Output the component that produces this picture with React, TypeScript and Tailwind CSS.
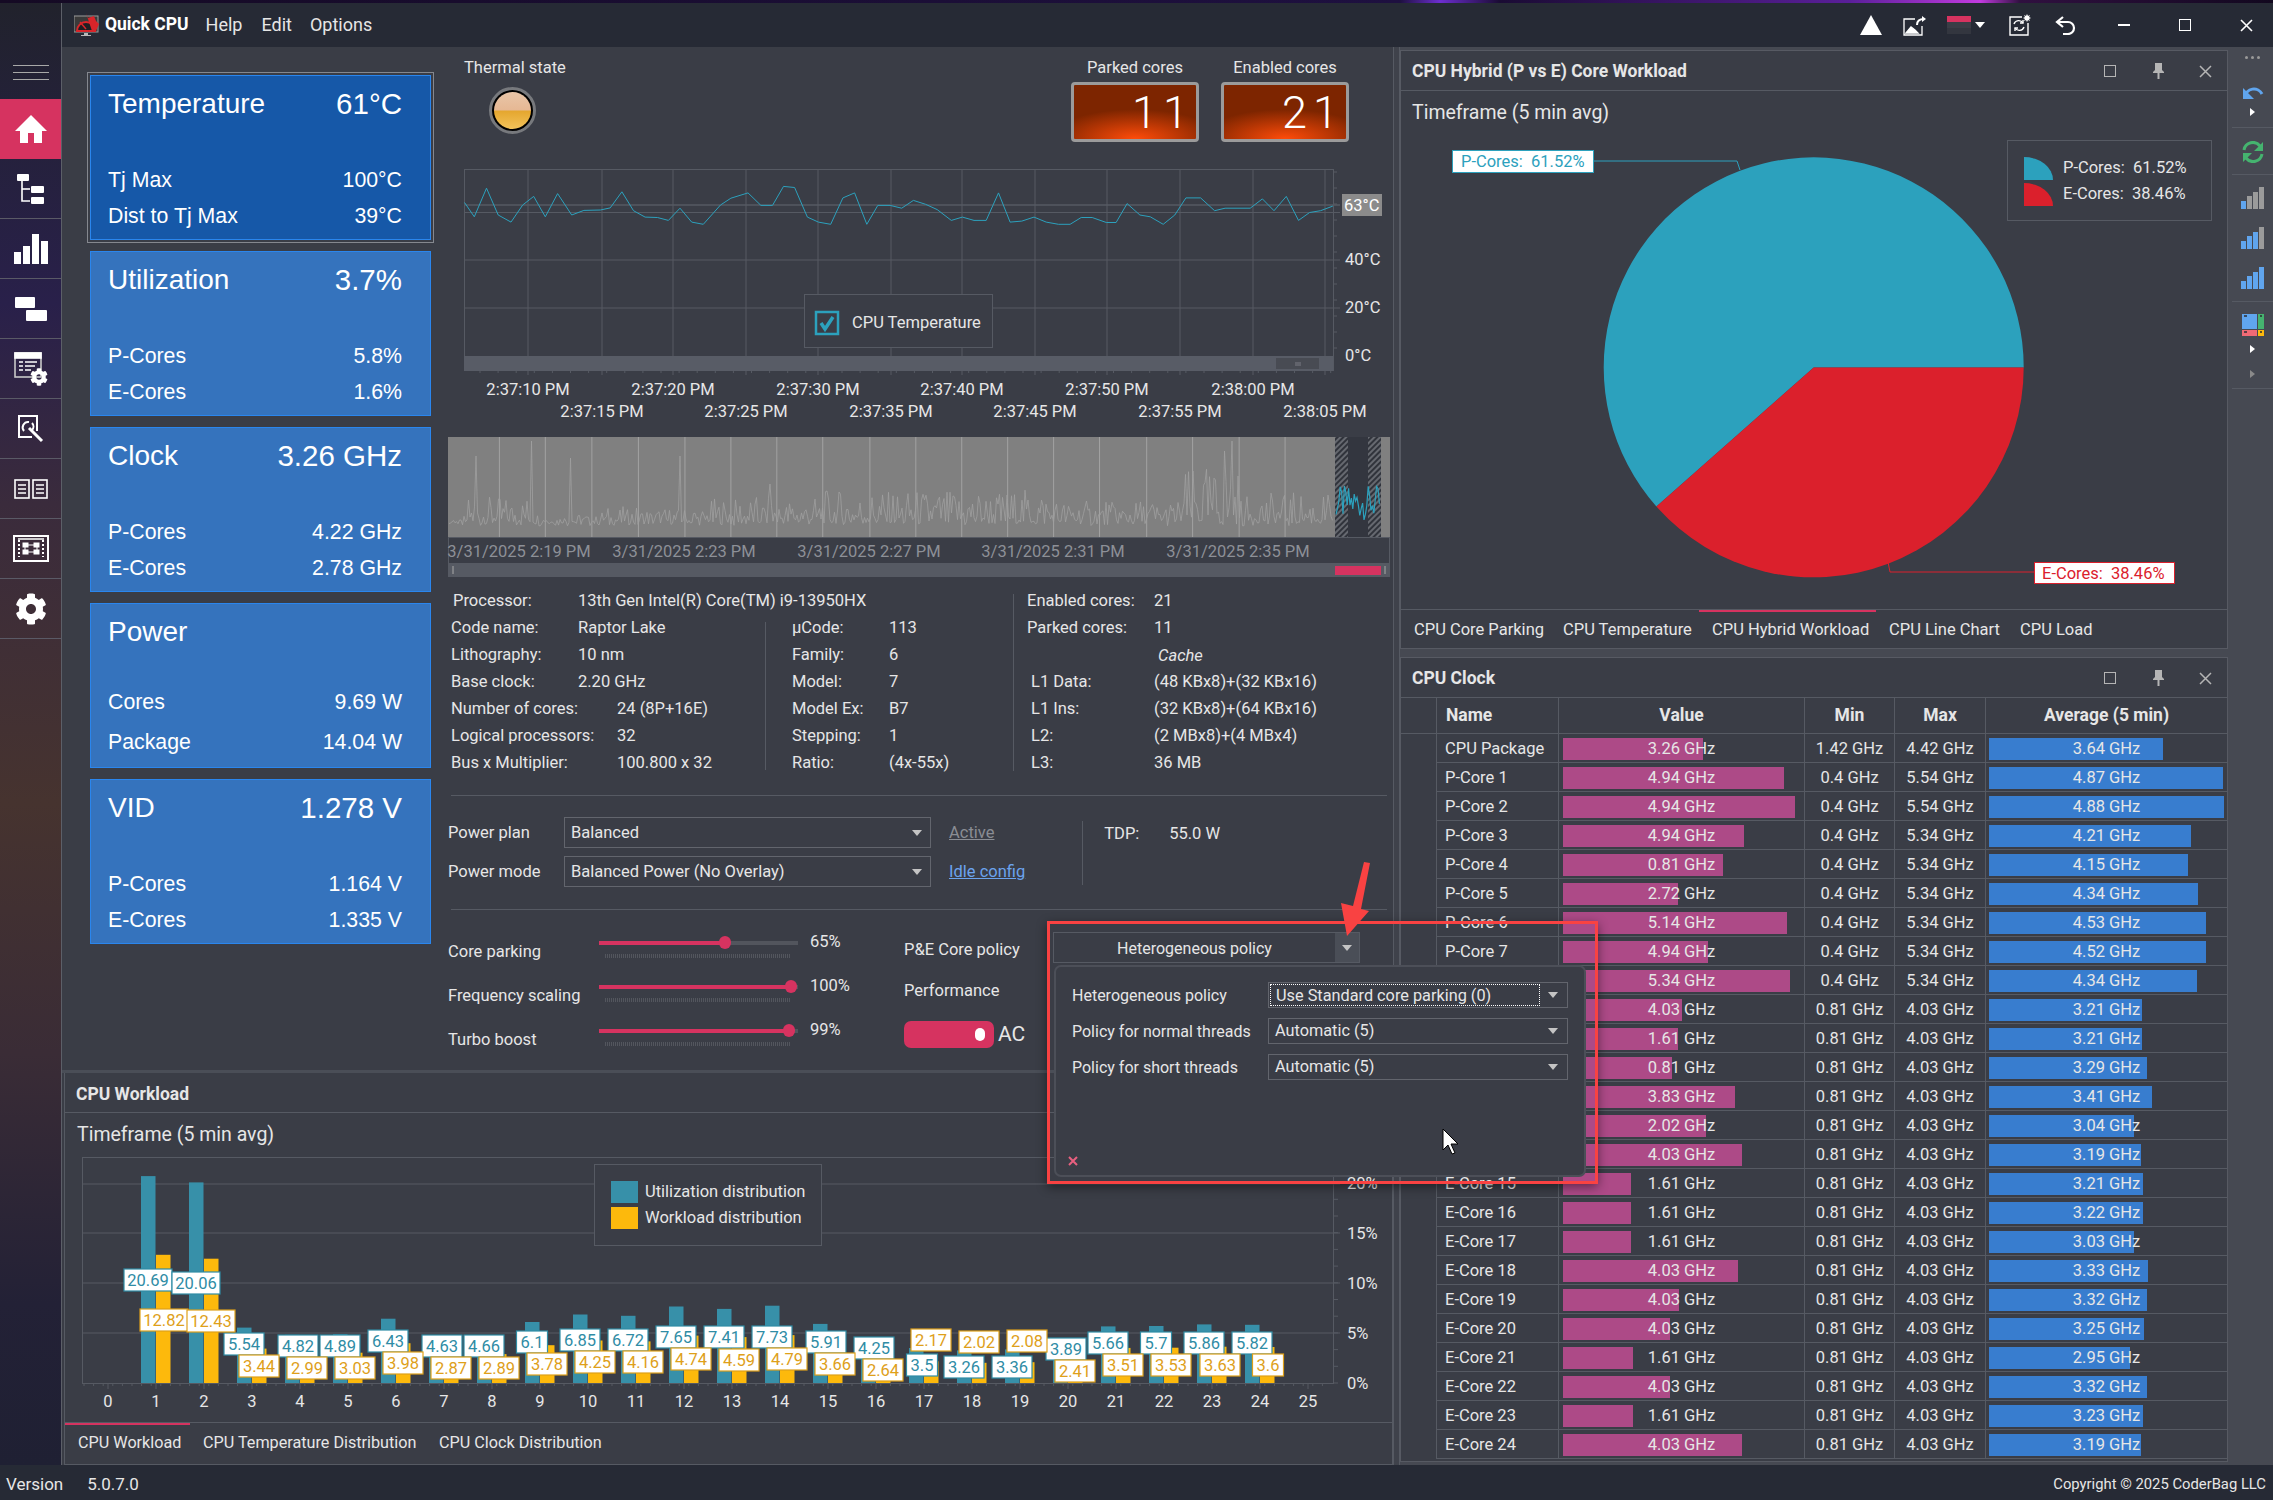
import { FaCog } from 'react-icons/fa';

const line = '#565a63';

// temperature trace, read off the chart (x/1.633, y/2.8 from the plot crop)
const tempTrace = [[40,455],[56,495],[76,415],[95,490],[116,510],[135,462],[153,438],[172,495],[192,430],[215,490],[235,477],[262,476],[278,470],[297,425],[316,478],[335,496],[355,497],[373,505],[392,471],[411,510],[430,516],[458,462],[475,443],[503,428],[524,463],[543,463],[561,410],[579,413],[600,496],[618,510],[638,516],[658,442],[677,428],[697,516],[715,463],[735,463],[754,471],[773,449],[793,460],[812,475],[835,505],[853,496],[872,505],[892,505],[912,428],[931,510],[950,507],[970,496],[990,510],[1010,516],[1029,516],[1047,497],[1065,497],[1088,511],[1104,511],[1122,458],[1143,490],[1160,495],[1181,516],[1200,490],[1218,442],[1242,442],[1265,478],[1282,471],[1323,471],[1343,445],[1362,478],[1382,438],[1402,505],[1420,483],[1438,478],[1458,465]]
    .map(([x, y]) => `${(440 + x / 1.633).toFixed(1)},${(40 + y / 2.8).toFixed(1)}`)
    .join(' ');

const rnd = (i: number) => {
    const v = Math.sin(i * 12.9898) * 43758.5453;
    return v - Math.floor(v);
};

const overviewAmp = (x: number) => {
    if (x < 466) return 6;
    if (x < 532) return 28;
    if (x < 600) return 10;
    if (x < 710) return 16;
    if (x < 820) return 26;
    if (x < 1050) return 34;
    if (x < 1180) return 24;
    if (x < 1240) return 56;
    return 30;
};

const spikes: Record<number, number> = { 476: 70, 510: 55, 532: 85, 571: 68, 680: 70, 770: 42, 1185: 62, 1197: 85, 1225: 75, 1232: 85 };

const overviewTrace = () => {
    const pts: string[] = [];
    for (let i = 0; i < 590; i++) {
        const x = 449 + i * 1.5;
        const r = rnd(i + 3);
        let h = r * r * overviewAmp(x) + rnd(i + 91) * 4;
        const s = spikes[Math.round(x)];
        if (s) h = s;
        pts.push(`${x},${(526 - h).toFixed(1)}`);
    }
    return pts.join(' ');
};

const windowTrace = () => {
    const pts: string[] = [];
    for (let i = 0; i < 32; i++) {
        pts.push(`${1336 + i * 1.4},${(508 - (rnd(i + 7) - 0.35) * 34).toFixed(1)}`);
    }
    return pts.join(' ');
};

const workload: [number, string, number, number, string, number, number][] = [
    [1, '20.69', 148, 1280, '12.82', 164, 1320],
    [2, '20.06', 196, 1283, '12.43', 211, 1321],
    [3, '5.54', 244, 1344, '3.44', 259, 1366],
    [4, '4.82', 298, 1346, '2.99', 307, 1368],
    [5, '4.89', 340, 1346, '3.03', 355, 1368],
    [6, '6.43', 388, 1341, '3.98', 403, 1363],
    [7, '4.63', 442, 1346, '2.87', 451, 1368],
    [8, '4.66', 484, 1346, '2.89', 499, 1368],
    [9, '6.1', 532, 1342, '3.78', 547, 1364],
    [10, '6.85', 580, 1340, '4.25', 595, 1362],
    [11, '6.72', 628, 1340, '4.16', 643, 1362],
    [12, '7.65', 676, 1337, '4.74', 691, 1359],
    [13, '7.41', 724, 1337, '4.59', 739, 1360],
    [14, '7.73', 772, 1337, '4.79', 787, 1359],
    [15, '5.91', 826, 1342, '3.66', 835, 1364],
    [16, '4.25', 874, 1348, '2.64', 883, 1370],
    [17, '3.5', 922, 1365, '2.17', 931, 1340],
    [18, '3.26', 964, 1367, '2.02', 979, 1342],
    [19, '3.36', 1012, 1367, '2.08', 1027, 1341],
    [20, '3.89', 1066, 1349, '2.41', 1075, 1371],
    [21, '5.66', 1108, 1343, '3.51', 1123, 1365],
    [22, '5.7', 1156, 1343, '3.53', 1171, 1365],
    [23, '5.86', 1204, 1343, '3.63', 1220, 1365],
    [24, '5.82', 1252, 1343, '3.6', 1268, 1365],
];

const clockRows: [string, string, number, string, string, string, number][] = [
    ['CPU Package', '3.26', 140, '1.42', '4.42', '3.64', 174],
    ['P-Core 1', '4.94', 221, '0.4', '5.54', '4.87', 234],
    ['P-Core 2', '4.94', 232, '0.4', '5.54', '4.88', 235],
    ['P-Core 3', '4.94', 181, '0.4', '5.34', '4.21', 202],
    ['P-Core 4', '0.81', 160, '0.4', '5.34', '4.15', 199],
    ['P-Core 5', '2.72', 115, '0.4', '5.34', '4.34', 209],
    ['P-Core 6', '5.14', 224, '0.4', '5.34', '4.53', 217],
    ['P-Core 7', '4.94', 145, '0.4', '5.34', '4.52', 217],
    ['P-Core 8', '5.34', 227, '0.4', '5.34', '4.34', 208],
    ['E-Core 9', '4.03', 119, '0.81', '4.03', '3.21', 153],
    ['E-Core 10', '1.61', 115, '0.81', '4.03', '3.21', 153],
    ['E-Core 11', '0.81', 109, '0.81', '4.03', '3.29', 158],
    ['E-Core 12', '3.83', 172, '0.81', '4.03', '3.41', 163],
    ['E-Core 13', '2.02', 143, '0.81', '4.03', '3.04', 145],
    ['E-Core 14', '4.03', 179, '0.81', '4.03', '3.19', 152],
    ['E-Core 15', '1.61', 68, '0.81', '4.03', '3.21', 154],
    ['E-Core 16', '1.61', 68, '0.81', '4.03', '3.22', 154],
    ['E-Core 17', '1.61', 68, '0.81', '4.03', '3.03', 145],
    ['E-Core 18', '4.03', 175, '0.81', '4.03', '3.33', 159],
    ['E-Core 19', '4.03', 116, '0.81', '4.03', '3.32', 158],
    ['E-Core 20', '4.03', 107, '0.81', '4.03', '3.25', 155],
    ['E-Core 21', '1.61', 70, '0.81', '4.03', '2.95', 141],
    ['E-Core 22', '4.03', 107, '0.81', '4.03', '3.32', 158],
    ['E-Core 23', '1.61', 70, '0.81', '4.03', '3.23', 154],
    ['E-Core 24', '4.03', 179, '0.81', '4.03', '3.19', 152],
];

const Caret = ({ color = '#c4c4c4' }: { color?: string }) => (
    <svg width="10" height="6" viewBox="0 0 10 6" className="shrink-0">
        <path d="M0 0h10L5 6z" fill={color} />
    </svg>
);

const SideSlot = ({ children, active }: { children: React.ReactNode; active?: boolean }) => (
    <div className={`h-[60px] flex items-center justify-center border-b ${active ? 'bg-[#d63360] border-transparent' : 'border-[#5a5a66]'}`}>
        {children}
    </div>
);

const Sidebar = () => (
    <div className="w-[62px] shrink-0 flex flex-col border-r border-[#5c5f68] bg-[linear-gradient(180deg,#21222c_0,#24213a_120px,#29204a_300px,#3a2b3c_500px,#46332f_800px,#3a2c36_1050px,#232136_1300px,#1f2033_1462px)]">
        <div className="h-[96px] flex flex-col items-center justify-start pt-[62px] gap-[6px]">
            <div className="w-[36px] h-px bg-[#a8a8a8]" />
            <div className="w-[36px] h-px bg-[#a8a8a8]" />
            <div className="w-[36px] h-px bg-[#a8a8a8]" />
        </div>
        <SideSlot active>
            <svg width="32" height="28" viewBox="0 0 32 28" fill="#fff">
                <path d="M16 0 32 16H27V28H19V18H13V28H5V16H0z" />
            </svg>
        </SideSlot>
        <SideSlot>
            <svg width="27" height="30" viewBox="0 0 27 30" fill="#fff">
                <rect x="0" y="0" width="12" height="7" rx="1" />
                <rect x="14" y="12" width="13" height="7" rx="1" />
                <rect x="14" y="23" width="13" height="7" rx="1" />
                <path d="M5 7v20h8" fill="none" stroke="#fff" strokeWidth="1.6" />
                <path d="M5 15h8" fill="none" stroke="#fff" strokeWidth="1.6" />
            </svg>
        </SideSlot>
        <SideSlot>
            <svg width="34" height="30" viewBox="0 0 34 30" fill="#fff">
                <rect x="0" y="18" width="7" height="12" />
                <rect x="9" y="12" width="7" height="18" />
                <rect x="18" y="0" width="7" height="30" />
                <rect x="27" y="7" width="7" height="23" />
            </svg>
        </SideSlot>
        <SideSlot>
            <svg width="32" height="24" viewBox="0 0 32 24" fill="#fff">
                <rect x="0" y="0" width="20" height="11" rx="1" />
                <rect x="11" y="13" width="21" height="11" rx="1" />
            </svg>
        </SideSlot>
        <SideSlot>
            <div className="relative w-[34px] h-[34px]">
                <svg width="28" height="26" viewBox="0 0 28 26" fill="none" stroke="#c8c8c8" strokeWidth="1.6">
                    <rect x="1" y="1" width="26" height="24" />
                    <rect x="1" y="1" width="26" height="5" fill="#fff" stroke="#fff" />
                    <path d="M5 10h4M11 10h12M5 14h4M11 14h10M5 18h4M11 18h6" stroke="#fff" />
                </svg>
                <FaCog className="absolute right-0 bottom-0 text-white" size={18} />
            </div>
        </SideSlot>
        <SideSlot>
            <svg width="26" height="28" viewBox="0 0 26 28" fill="none" stroke="#fff" strokeWidth="2">
                <path d="M19 16V1H1v21h13" />
                <path d="M6 16a5.5 5.5 0 0 1 5-9" />
                <path d="M14 8a5 5 0 0 1 0 7" />
                <path d="m11 13 13 13" strokeWidth="3" />
            </svg>
        </SideSlot>
        <SideSlot>
            <svg width="34" height="20" viewBox="0 0 34 20" fill="none" stroke="#fff" strokeWidth="1.6">
                <rect x="1" y="1" width="14" height="18" />
                <rect x="19" y="1" width="14" height="18" />
                <path d="M4 6h8M4 10h8M4 14h8M22 6h8M22 10h8M22 14h8" />
            </svg>
        </SideSlot>
        <SideSlot>
            <svg width="36" height="27" viewBox="0 0 36 27" fill="none" stroke="#fff">
                <rect x="1" y="1" width="34" height="25" strokeWidth="2" />
                <path d="M6 5v17M30 5v17" strokeDasharray="2 2" strokeWidth="2" />
                <path d="M5 4h26" strokeWidth="1.5" />
                <rect x="10" y="8" width="5" height="4" fill="#fff" />
                <rect x="21" y="8" width="5" height="4" fill="#fff" />
                <rect x="10" y="15" width="5" height="4" fill="#fff" />
                <rect x="21" y="15" width="5" height="4" fill="#fff" />
                <path d="M15 10h6M15 17h6M12 12v3M24 12v3" />
            </svg>
        </SideSlot>
        <SideSlot>
            <FaCog className="text-white" size={32} />
        </SideSlot>
    </div>
);

const TitleBar = () => (
    <div className="h-[44px] shrink-0 flex items-center bg-[#262a35] text-[18px]">
        <svg width="25" height="24" viewBox="0 0 25 24" className="ml-[12px]">
            <rect x="0" y="3" width="24" height="16" fill="#3a3a3a" stroke="#9a9a9a" />
            <path d="M3 18a9 9 0 0 1 18 0z" fill="#1e1e22" stroke="#d8252a" strokeWidth="2" />
            <path d="M12 0l2 5 6-2 2 5 3 3-3 7h-4z" fill="#d8252a" />
            <path d="M12 16 6 9" stroke="#d8252a" strokeWidth="1.5" />
            <path d="M10 20h4v2h3v1H7v-1h3z" fill="#b8b8b8" />
        </svg>
        <span className="ml-[6px] font-bold text-white text-[17.5px]">Quick CPU</span>
        <span className="ml-[17px] text-[#e6e6e6]">Help</span>
        <span className="ml-[19px] text-[#e6e6e6]">Edit</span>
        <span className="ml-[18px] text-[#e6e6e6]">Options</span>
        <div className="ml-auto flex items-center pr-[20px]">
            <svg width="22" height="20" viewBox="0 0 22 20"><path d="M11 0 22 20H0z" fill="#fff" /></svg>
            <svg width="24" height="21" viewBox="0 0 24 21" className="ml-[21px]" fill="none" stroke="#fff" strokeWidth="1.3">
                <path d="M12 4H1v16h18V11" />
                <path d="M3 18l5-6 4 3 3 3z" fill="#fff" />
                <path d="M14 10c0-4 3-6 7-6" strokeWidth="2" />
                <path d="M19 1l4 3-4 3z" fill="#fff" stroke="none" />
            </svg>
            <div className="ml-[20px] w-[24px] h-[18px] flex flex-col">
                <div className="h-[6px] bg-[#d63360]" />
                <div className="h-[6px] bg-[#3a3d46]" />
                <div className="h-[6px] bg-[#33363f]" />
            </div>
            <div className="ml-[4px]"><Caret color="#ffffff" /></div>
            <svg width="22" height="22" viewBox="0 0 22 22" className="ml-[24px]" fill="none" stroke="#fff" strokeWidth="1.4">
                <path d="M13 3H1v18h18V9" />
                <path d="M5 10a5 5 0 0 1 9-1M15 13a5 5 0 0 1-9 1" />
                <path d="M14 6v3h-3M6 17v-3h3" />
                <path d="M18 0l1 2 2-1-1 2 2 1-2 1 1 2-2-1-1 2-1-2-2 1 1-2-2-1 2-1-1-2 2 1z" fill="#fff" stroke="none" />
            </svg>
            <svg width="21" height="19" viewBox="0 0 21 19" className="ml-[24px]" fill="none" stroke="#fff" strokeWidth="2.2">
                <path d="M8 1 2 6l6 5" />
                <path d="M2 6h11a6 6 0 0 1 0 12H8" />
            </svg>
            <div className="ml-[42px] w-[12px] h-[2px] bg-white" />
            <div className="ml-[49px] w-[12px] h-[12px] border-[1.5px] border-white" />
            <svg width="13" height="13" viewBox="0 0 13 13" className="ml-[49px]" stroke="#fff" strokeWidth="1.6"><path d="M1 1l11 11M12 1 1 12" /></svg>
        </div>
    </div>
);

const Card = ({ title, value, rows, selected, power }: { title: string; value?: string; rows: [string, string][]; selected?: boolean; power?: boolean }) => (
    <div className={`h-[165px] w-[341px] pl-[17px] pr-[28px] pt-[10px] border-[1.5px] border-[#2a86ee] font-['Liberation_Sans',Arial,sans-serif] text-white ${selected ? 'bg-[#1658a8] outline outline-[1px] outline-offset-[2px] outline-[#85888f]' : 'bg-[#3573bd]'}`}>
        <div className="h-[34px] flex items-center justify-between">
            <span className="text-[28px]">{title}</span>
            <span className="text-[29.5px] pt-[3px]">{value}</span>
        </div>
        <div className={`flex flex-col ${power ? 'mt-[41px] gap-[14px]' : 'mt-[47px] gap-[10px]'}`}>
            {rows.map(([label, val]) => (
                <div key={label} className="h-[26px] flex items-center justify-between text-[21.3px]">
                    <span>{label}</span>
                    <span>{val}</span>
                </div>
            ))}
        </div>
    </div>
);

const Segment = ({ value }: { value: string }) => (
    <div className="w-[128px] h-[60px] rounded-[4px] border-[3px] border-[#9b9b9b] bg-[radial-gradient(ellipse_70%_55%_at_50%_100%,#ff4c0a_0,#b83604_55%,#7d2500_100%)] flex items-center justify-end pr-[2px] font-light text-[45px] leading-none text-white">
        <span className="tracking-[6px]">{value}</span>
    </div>
);

const TempChart = () => {
    const vx = [528, 602, 673, 746, 818, 891, 962, 1035, 1107, 1180, 1253, 1325];
    const row1: [number, string][] = [[528, '2:37:10 PM'], [673, '2:37:20 PM'], [818, '2:37:30 PM'], [962, '2:37:40 PM'], [1107, '2:37:50 PM'], [1253, '2:38:00 PM']];
    const row2: [number, string][] = [[602, '2:37:15 PM'], [746, '2:37:25 PM'], [891, '2:37:35 PM'], [1035, '2:37:45 PM'], [1180, '2:37:55 PM'], [1325, '2:38:05 PM']];
    return (
        <svg width="953" height="270" viewBox="440 160 953 270" className="block shrink-0 text-[16.5px]">
            <rect x="464.5" y="169.5" width="869" height="201" fill="none" stroke={line} />
            {vx.map((x) => <line key={x} x1={x} x2={x} y1="169" y2="375" stroke={line} />)}
            {[205, 212.5, 260, 308].map((y) => <line key={y} x1="464" x2="1340" y1={y} y2={y} stroke={line} strokeWidth={y === 205 ? 1.5 : 1} />)}
            {Array.from({ length: 12 }, (_, i) => <line key={i} x1="1333" x2="1337" y1={172 + i * 16} y2={172 + i * 16} stroke={line} />)}
            {Array.from({ length: 48 }, (_, i) => <line key={i} x1={480 + i * 18.1} x2={480 + i * 18.1} y1="371" y2="373" stroke={line} />)}
            <polyline points={tempTrace} fill="none" stroke="#2ca1bd" strokeWidth="1" />
            <rect x="464" y="356" width="869" height="15" fill="#585c66" />
            <rect x="1276" y="358" width="43" height="11" fill="#484b53" />
            <path d="M1296 362v4M1298 362v4M1300 362v4" stroke="#7a7d85" />
            <rect x="804.5" y="294.5" width="188" height="53" fill="#3a3d46" stroke={line} />
            <rect x="816" y="312" width="22" height="22" fill="none" stroke="#2ca1bd" strokeWidth="2.5" />
            <path d="M821 323l4 6 8-12" fill="none" stroke="#2ca1bd" strokeWidth="3.5" />
            <text x="852" y="328" fill="#e6e6e6">CPU Temperature</text>
            <rect x="1342" y="194" width="40" height="22" fill="#8b8b8b" />
            <text x="1344" y="211" fill="#fff">63°C</text>
            <text x="1345" y="265" fill="#e6e6e6">40°C</text>
            <text x="1345" y="313" fill="#e6e6e6">20°C</text>
            <text x="1345" y="361" fill="#e6e6e6">0°C</text>
            {row1.map(([x, t]) => <text key={t} x={x} y="395" textAnchor="middle" fill="#e6e6e6">{t}</text>)}
            {row2.map(([x, t]) => <text key={t} x={x} y="417" textAnchor="middle" fill="#e6e6e6">{t}</text>)}
        </svg>
    );
};

const OverviewChart = () => {
    const gx = [97, 172, 248, 324, 400, 475, 550, 625, 702, 777, 852, 927, 1002, 1077, 1154, 1229, 1305, 1380].map((x) => 440 + x / 1.633);
    const dates: [number, string][] = [[519, '3/31/2025 2:19 PM'], [684, '3/31/2025 2:23 PM'], [869, '3/31/2025 2:27 PM'], [1053, '3/31/2025 2:31 PM'], [1238, '3/31/2025 2:35 PM']];
    return (
        <svg width="953" height="155" viewBox="440 430 953 155" className="block shrink-0 text-[16.5px]">
            <defs>
                <pattern id="hatch" width="4" height="4" patternUnits="userSpaceOnUse" patternTransform="rotate(45)">
                    <rect width="4" height="4" fill="#30333b" />
                    <rect width="2" height="4" fill="#666970" />
                </pattern>
            </defs>
            <rect x="448" y="437" width="942" height="100" fill="#808080" />
            {gx.map((x) => <line key={x} x1={x} x2={x} y1="437" y2="537" stroke="#a2a2a2" />)}
            <polyline points={overviewTrace()} fill="none" stroke="#9f9f9f" strokeWidth="0.8" />
            <rect x="1335" y="437" width="46" height="100" fill="#33363f" />
            <rect x="1335" y="437" width="13" height="100" fill="url(#hatch)" />
            <rect x="1368" y="437" width="13" height="100" fill="url(#hatch)" />
            <polyline points={windowTrace()} fill="none" stroke="#2ca1bd" strokeWidth="1.2" />
            <rect x="448.5" y="537.5" width="941" height="39" fill="none" stroke={line} />
            {dates.map(([x, t]) => <text key={t} x={x} y="557" textAnchor="middle" fill="#8d9097">{t}</text>)}
            <rect x="448" y="563" width="942" height="14" fill="#565a63" />
            <rect x="1335" y="566" width="46" height="9" fill="#d63360" />
            <path d="M453 566v8M1385 566v8" stroke="#a9a9a9" />
        </svg>
    );
};

const InfoRow = ({ label, value, w, className }: { label: string; value: string; w: string; className?: string }) => (
    <div className={`h-[27px] flex items-center whitespace-nowrap ${className ?? ''}`}>
        <span className={`${w} shrink-0`}>{label}</span>
        <span>{value}</span>
    </div>
);

const InfoBlock = () => (
    <div className="h-[189px] shrink-0 flex mt-[3px] text-[#e6e6e6]">
        <div className="w-[325px] pl-[11px] shrink-0">
            <InfoRow label="Processor:" value="13th Gen Intel(R) Core(TM) i9-13950HX" w="w-[125px]" className="pl-[2px]" />
            <InfoRow label="Code name:" value="Raptor Lake" w="w-[127px]" />
            <InfoRow label="Lithography:" value="10 nm" w="w-[127px]" />
            <InfoRow label="Base clock:" value="2.20 GHz" w="w-[127px]" />
            <InfoRow label="Number of cores:" value="24 (8P+16E)" w="w-[166px]" />
            <InfoRow label="Logical processors:" value="32" w="w-[166px]" />
            <InfoRow label="Bus x Multiplier:" value="100.800 x 32" w="w-[166px]" />
        </div>
        <div className="w-[248px] pt-[27px] shrink-0 flex">
            <div className="w-px h-[148px] mt-[7px] bg-[#565a63]" />
            <div className="pl-[26px]">
                <InfoRow label="μCode:" value="113" w="w-[97px]" />
                <InfoRow label="Family:" value="6" w="w-[97px]" />
                <InfoRow label="Model:" value="7" w="w-[97px]" />
                <InfoRow label="Model Ex:" value="B7" w="w-[97px]" />
                <InfoRow label="Stepping:" value="1" w="w-[97px]" />
                <InfoRow label="Ratio:" value="(4x-55x)" w="w-[97px]" />
            </div>
        </div>
        <div className="flex">
            <div className="w-px h-[177px] mt-[6px] bg-[#565a63]" />
            <div className="pl-[13px]">
                <InfoRow label="Enabled cores:" value="21" w="w-[127px]" />
                <InfoRow label="Parked cores:" value="11" w="w-[127px]" />
                <div className="h-[27px] flex items-center pl-[131px] italic pt-[2px]">Cache</div>
                <InfoRow label="L1 Data:" value="(48 KBx8)+(32 KBx16)" w="w-[123px]" className="pl-[4px]" />
                <InfoRow label="L1 Ins:" value="(32 KBx8)+(64 KBx16)" w="w-[123px]" className="pl-[4px]" />
                <InfoRow label="L2:" value="(2 MBx8)+(4 MBx4)" w="w-[123px]" className="pl-[4px]" />
                <InfoRow label="L3:" value="36 MB" w="w-[123px]" className="pl-[4px]" />
            </div>
        </div>
    </div>
);

const Combo = ({ value, w }: { value: string; w: string }) => (
    <div className={`${w} h-[31px] border border-[#62656d] flex items-center justify-between pl-[6px] pr-[8px]`}>
        <span className="pt-[1px]">{value}</span>
        <Caret />
    </div>
);

const PowerBlock = () => (
    <div className="h-[70px] shrink-0 mt-[21px] flex text-[#e6e6e6]">
        <div className="flex flex-col gap-[8px]">
            <div className="flex items-center">
                <span className="w-[124px] pl-[8px] pt-[2px] shrink-0">Power plan</span>
                <Combo value="Balanced" w="w-[367px]" />
                <span className="ml-[18px] pt-[2px] underline text-[#8a8d94]">Active</span>
            </div>
            <div className="flex items-center">
                <span className="w-[124px] pl-[8px] pt-[2px] shrink-0">Power mode</span>
                <Combo value="Balanced Power (No Overlay)" w="w-[367px]" />
                <span className="ml-[18px] pt-[2px] underline text-[#6ba3ee]">Idle config</span>
            </div>
        </div>
        <div className="ml-[57px] h-[64px] mt-[4px] w-px bg-[#565a63]" />
        <div className="ml-[21px] h-[34px] pt-[1px] flex items-center">
            <span className="w-[65px]">TDP:</span>
            <span>55.0 W</span>
        </div>
    </div>
);

const Slider = ({ label, fill, thumb, value }: { label: string; fill: string; thumb: string; value: string }) => (
    <div className="h-[44px] flex items-start">
        <span className="w-[159px] pl-[8px] mt-[15px] h-[20px] leading-[20px] shrink-0">{label}</span>
        <div className="relative w-[199px] h-[44px]">
            <div className="absolute left-0 right-0 top-[14px] h-[4px] bg-[#52555d]" />
            <div className={`absolute left-0 top-[14px] h-[4px] bg-[#d63360] ${fill}`} />
            <div className={`absolute top-[9px] w-[12px] h-[13px] rounded-full bg-[#d63360] ${thumb}`} />
            <div className="absolute left-[6px] w-[185px] top-[27px] h-[4px] bg-[repeating-linear-gradient(90deg,#53565e_0,#53565e_1px,transparent_1px,transparent_2px)]" />
        </div>
        <span className="ml-[12px] mt-[5px] h-[20px] leading-[20px]">{value}</span>
    </div>
);

const ControlBlock = () => (
    <div className="flex-1 mt-[17px] flex text-[#e6e6e6]">
        <div className="w-[464px] shrink-0">
            <Slider label="Core parking" fill="w-[126px]" thumb="left-[120px]" value="65%" />
            <Slider label="Frequency scaling" fill="w-[192px]" thumb="left-[186px]" value="100%" />
            <Slider label="Turbo boost" fill="w-[190px]" thumb="left-[184px]" value="99%" />
        </div>
        <div className="flex flex-col">
            <span className="mt-[13px] h-[20px] leading-[20px]">P&amp;E Core policy</span>
            <span className="mt-[21px] h-[20px] leading-[20px]">Performance</span>
            <div className="mt-[20px] flex items-center">
                <div className="w-[90px] h-[27px] rounded-[7px] bg-[#d63360] flex items-center justify-end pr-[9px]">
                    <div className="w-[10px] h-[13px] rounded-full bg-white" />
                </div>
                <span className="ml-[4px] text-[21px]">AC</span>
            </div>
        </div>
    </div>
);

const Label = ({ x, y, text, color }: { x: number; y: number; text: string; color: string }) => {
    const w = text.length >= 5 ? 48 : text.length === 4 ? 40 : 31;
    return (
        <g>
            <rect x={x - w / 2} y={y - 11} width={w} height={22} fill="#fff" stroke={color} strokeWidth="1.2" />
            <text x={x} y={y + 6} textAnchor="middle" fill={color}>{text}</text>
        </g>
    );
};

const WorkloadChart = () => (
    <svg width="1327" height="272" viewBox="65 1150 1327 272" className="block shrink-0 text-[16.5px]">
        <rect x="82.5" y="1157.5" width="1251" height="226" fill="none" stroke={line} />
        {[1184, 1233, 1283, 1333].map((y) => <line key={y} x1="82" x2="1340" y1={y} y2={y} stroke={line} />)}
        {Array.from({ length: 13 }, (_, i) => <line key={i} x1="1334" x2="1338" y1={1383 - i * 16.7} y2={1383 - i * 16.7} stroke={line} />)}
        {Array.from({ length: 130 }, (_, i) => <line key={i} x1={84 + i * 9.6} x2={84 + i * 9.6} y1="1383" y2="1386" stroke={line} />)}
        {Array.from({ length: 26 }, (_, i) => <line key={i} x1={108 + i * 48} x2={108 + i * 48} y1="1383" y2="1389" stroke={line} />)}
        {workload.map(([c, t, , , a]) => {
            const cx = 108 + c * 48;
            const th = Number(t) * 10;
            const ah = Number(a) * 10;
            return (
                <g key={c}>
                    <rect x={cx - 15} y={1383 - th} width="14.5" height={th} fill="#3790a9" />
                    <rect x={cx} y={1383 - ah} width="14.5" height={ah} fill="#fdb90c" />
                </g>
            );
        })}
        {workload.map(([c, t, tx, ty]) => <Label key={c} x={tx} y={ty} text={t} color="#2f8ca5" />)}
        {workload.map(([c, , , , a, ax, ay]) => <Label key={c} x={ax} y={ay} text={a} color="#dea01a" />)}
        {Array.from({ length: 26 }, (_, i) => <text key={i} x={108 + i * 48} y="1407" textAnchor="middle" fill="#e6e6e6">{i}</text>)}
        {[['20%', 1189], ['15%', 1239], ['10%', 1289], ['5%', 1339], ['0%', 1389]].map(([t, y]) => <text key={t} x="1347" y={y} fill="#e6e6e6">{t}</text>)}
        <rect x="594.5" y="1164.5" width="227" height="81" fill="#3a3d46" stroke={line} />
        <rect x="611" y="1181" width="27" height="22" fill="#3790a9" />
        <rect x="611" y="1207" width="27" height="22" fill="#fdb90c" />
        <text x="645" y="1197" fill="#e6e6e6">Utilization distribution</text>
        <text x="645" y="1223" fill="#e6e6e6">Workload distribution</text>
    </svg>
);

const Tab = ({ label, w, active }: { label: string; w: string; active?: boolean }) => (
    <div className={`${w} h-full shrink-0 pl-[13px] flex items-center border-t-2 whitespace-nowrap ${active ? 'border-[#d63360]' : 'border-transparent'}`}>{label}</div>
);

const WorkloadPanel = () => (
    <div className="h-[392px] ml-[2px] border-x border-b border-[#565a63] flex flex-col text-[#e6e6e6]">
        <div className="h-[40px] shrink-0 pl-[11px] pt-[4px] flex items-center border-b border-[#565a63] font-bold text-[17.5px]">CPU Workload</div>
        <div className="h-[37px] shrink-0 pl-[12px] pt-[7px] flex items-center text-[19.5px]">Timeframe (5 min avg)</div>
        <WorkloadChart />
        <div className="flex-1 flex border-t border-[#565a63] pb-[2px] text-[16.2px]">
            <Tab label="CPU Workload" w="w-[125px]" active />
            <Tab label="CPU Temperature Distribution" w="w-[236px]" />
            <Tab label="CPU Clock Distribution" w="w-[220px]" />
        </div>
    </div>
);

const PanelHeader = ({ title }: { title: string }) => (
    <div className="h-[40px] shrink-0 pl-[11px] flex items-center border-b border-[#565a63] text-[#e6e6e6]">
        <span className="font-bold text-[17.5px] pt-[3px]">{title}</span>
        <div className="ml-auto flex items-center pr-[15px] pt-[1px]">
            <div className="w-[12px] h-[12px] border-[1.5px] border-[#b5b5b5]" />
            <svg width="11" height="16" viewBox="0 0 11 16" className="ml-[37px]" fill="#b5b5b5"><path d="M2 0h7v7l2 2v1H0V9l2-2zM4.5 10h2v6h-2z" /></svg>
            <svg width="13" height="13" viewBox="0 0 13 13" className="ml-[35px]" stroke="#b5b5b5" strokeWidth="1.5"><path d="M1 1l11 11M12 1 1 12" /></svg>
        </div>
    </div>
);

const HybridPanel = () => (
    <div className="h-[599px] shrink-0 bg-[#3a3d46] border border-[#575a63] flex flex-col text-[#e6e6e6]">
        <PanelHeader title="CPU Hybrid (P vs E) Core Workload" />
        <div className="h-[42px] shrink-0 pl-[11px] pt-[2px] flex items-center text-[19.5px]">Timeframe (5 min avg)</div>
        <svg width="826" height="476" viewBox="1401 133 826 476" className="block shrink-0 text-[16.5px]">
            <path d="M1813.7 367.4H2023.7A210 210 0 1 0 1656.4 506.5Z" fill="#2ca1bd" />
            <path d="M1813.7 367.4H2023.7A210 210 0 0 1 1656.4 506.5Z" fill="#db202c" />
            <path d="M1593 161H1737l3 9" fill="none" stroke="#2ca1bd" />
            <path d="M2034 572H1890l-2-10" fill="none" stroke="#db202c" />
            <rect x="1452.5" y="150.5" width="141" height="22" fill="#fff" stroke="#2ca1bd" />
            <text x="1461" y="167" fill="#2ca1bd" className="whitespace-pre">P-Cores:  61.52%</text>
            <rect x="2034.5" y="562.5" width="140" height="21" fill="#fff" stroke="#db202c" />
            <text x="2042" y="579" fill="#db202c" className="whitespace-pre">E-Cores:  38.46%</text>
            <rect x="2007.5" y="140.5" width="204" height="80" fill="#3a3d46" stroke={line} />
            <path d="M2024 180V157A29 23 0 0 1 2053 180Z" fill="#2ca1bd" />
            <path d="M2024 206V183A29 23 0 0 1 2053 206Z" fill="#db202c" />
            <text x="2063" y="173" fill="#e6e6e6" className="whitespace-pre">P-Cores:  61.52%</text>
            <text x="2063" y="199" fill="#e6e6e6" className="whitespace-pre">E-Cores:  38.46%</text>
        </svg>
        <div className="flex-1 flex border-t border-[#565a63]">
            <Tab label="CPU Core Parking" w="w-[149px]" />
            <Tab label="CPU Temperature" w="w-[149px]" />
            <Tab label="CPU Hybrid Workload" w="w-[177px]" active />
            <Tab label="CPU Line Chart" w="w-[131px]" />
            <Tab label="CPU Load" w="w-[110px]" />
        </div>
    </div>
);

const ClockPanel = () => (
    <div className="h-[805px] mt-[8px] shrink-0 bg-[#3a3d46] border border-[#575a63] flex flex-col text-[#e6e6e6]">
        <PanelHeader title="CPU Clock" />
        <div className="h-[36px] shrink-0 flex border-b border-[#565a63] font-bold text-[17.5px]">
            <div className="w-[36px] shrink-0 border-r border-[#565a63]" />
            <div className="w-[122px] shrink-0 pl-[9px] flex items-center border-r border-[#565a63]">Name</div>
            <div className="w-[246px] shrink-0 flex items-center justify-center border-r border-[#565a63]">Value</div>
            <div className="w-[90px] shrink-0 flex items-center justify-center border-r border-[#565a63]">Min</div>
            <div className="w-[91px] shrink-0 flex items-center justify-center border-r border-[#565a63]">Max</div>
            <div className="flex-1 flex items-center justify-center">Average (5 min)</div>
        </div>
        {clockRows.map(([name, val, vw, min, max, avg, aw]) => (
            <div key={name} className="h-[29px] shrink-0 flex">
                <div className="w-[36px] shrink-0 border-r border-[#565a63]" />
                <div className="flex-1 flex border-b border-[#565a63]">
                    <div className="w-[122px] shrink-0 pl-[8px] pt-[2px] flex items-center border-r border-[#565a63]">{name}</div>
                    <div className="relative w-[246px] shrink-0 pt-[2px] flex items-center justify-center border-r border-[#565a63]">
                        <div className="absolute left-[4px] top-[4px] h-[22px] bg-[#ad4a87]" style={{ width: vw }} />
                        <span className="relative">{val} GHz</span>
                    </div>
                    <div className="w-[90px] shrink-0 pt-[2px] flex items-center justify-center border-r border-[#565a63]">{min} GHz</div>
                    <div className="w-[91px] shrink-0 pt-[2px] flex items-center justify-center border-r border-[#565a63]">{max} GHz</div>
                    <div className="relative flex-1 pt-[2px] flex items-center justify-center">
                        <div className="absolute left-[3px] top-[4px] h-[22px] bg-[#387dcf]" style={{ width: aw }} />
                        <span className="relative">{avg} GHz</span>
                    </div>
                </div>
            </div>
        ))}
    </div>
);

const RailBars = ({ on }: { on: number }) => {
    const hs = [8, 13, 17, 22];
    return (
        <div className="h-[22px] flex items-end gap-[1px]">
            {hs.map((h, i) => (
                <svg key={h} width="5" height={h} className="block"><rect width="5" height={h} fill={i < on ? '#60a5ee' : '#9b9b9b'} /></svg>
            ))}
        </div>
    );
};

const RightArrow = ({ color = '#ffffff' }: { color?: string }) => (
    <svg width="5" height="8" viewBox="0 0 5 8"><path d="M0 0l5 4-5 4z" fill={color} /></svg>
);

const Rail = () => (
    <div className="w-[45px] shrink-0 bg-[#464952] flex flex-col items-center pl-[4px]">
        <div className="mt-[9px] flex gap-[3px]">
            <div className="w-[3px] h-[3px] rounded-full bg-[#9a9a9a]" />
            <div className="w-[3px] h-[3px] rounded-full bg-[#9a9a9a]" />
            <div className="w-[3px] h-[3px] rounded-full bg-[#9a9a9a]" />
        </div>
        <svg width="22" height="18" viewBox="0 0 22 18" className="mt-[23px]" fill="none" stroke="#60a5ee" strokeWidth="3">
            <path d="M3 15a9 9 0 0 1 17-3" />
            <path d="M1 6v11h11z" fill="#60a5ee" stroke="none" />
        </svg>
        <div className="mt-[8px] h-[8px] flex"><RightArrow /></div>
        <div className="mt-[11px] h-px w-full bg-[#565a63]" />
        <svg width="22" height="22" viewBox="0 0 22 22" className="mt-[13px]" fill="none" stroke="#45b36f" strokeWidth="3">
            <path d="M2 9a9 9 0 0 1 16-4" />
            <path d="M20 13a9 9 0 0 1-16 4" />
            <path d="M21 1v9h-9zM1 21v-9h9z" fill="#45b36f" stroke="none" />
        </svg>
        <div className="mt-[11px] h-px w-full bg-[#565a63]" />
        <div className="mt-[12px]"><RailBars on={1} /></div>
        <div className="mt-[18px]"><RailBars on={3} /></div>
        <div className="mt-[18px]"><RailBars on={4} /></div>
        <div className="mt-[12px] h-px w-full bg-[#565a63]" />
        <svg width="22" height="22" viewBox="0 0 22 22" className="mt-[12px]">
            <rect x="0" y="0" width="15" height="15" fill="#60a5ee" />
            <rect x="16" y="0" width="6" height="15" fill="#45b36f" />
            <rect x="0" y="16" width="15" height="6" fill="#f06a75" />
            <rect x="16" y="16" width="6" height="6" fill="#fdb90c" />
            <path d="M2 2h3M18 2h2M2 18h3M18 18h2" stroke="#2a2c33" strokeWidth="1.4" />
        </svg>
        <div className="mt-[9px] h-[8px] flex"><RightArrow /></div>
        <div className="mt-[17px] h-[8px] flex"><RightArrow color="#8a8a8a" /></div>
        <div className="mt-[10px] h-px w-full bg-[#565a63]" />
    </div>
);

const PolicyPopup = () => (
    <div className="absolute left-[1047px] top-[921px] w-[551px] h-[263px] border-[3px] border-[#f94242] shadow-[0_3px_10px_rgba(0,0,0,0.45)] text-[#e6e6e6] text-[16px]">
        <div className="ml-[3px] mt-[8px] w-[307px] h-[31px] bg-[#3a3d46] border border-[#565a63] flex items-stretch">
            <div className="flex-1 pt-[2px] flex items-center justify-center">Heterogeneous policy</div>
            <div className="w-[24px] bg-[#4a4e57] flex items-center justify-center"><Caret /></div>
        </div>
        <div className="ml-[4px] mt-[2px] w-[532px] h-[212px] bg-[#3a3d46] rounded-[7px] border-2 border-[#4c4f58] flex flex-col pl-[16px] pt-[15px]">
            {['Heterogeneous policy', 'Policy for normal threads', 'Policy for short threads'].map((label, i) => (
                <div key={label} className="h-[26px] mb-[10px] flex items-center">
                    <span className="w-[196px] shrink-0 pt-[2px]">{label}</span>
                    <div className="w-[300px] h-[26px] border border-[#62656d] flex items-center pl-[6px] pr-[9px] justify-between">
                        {i === 0 ? (
                            <span className="w-[270px] h-[22px] -ml-[5px] pl-[5px] leading-[21px] border border-dotted border-white text-[16.3px]">Use Standard core parking (0)</span>
                        ) : (
                            <span className="pt-[1px] text-[16.3px]">Automatic (5)</span>
                        )}
                        <Caret />
                    </div>
                </div>
            ))}
            <svg width="10" height="10" viewBox="0 0 10 10" className="mt-[66px] -ml-[4px]" stroke="#e8607f" strokeWidth="2"><path d="M1 1l8 8M9 1 1 9" /></svg>
        </div>
    </div>
);

export default function App() {
    return (
        <div className="relative w-[2273px] h-[1500px] overflow-hidden flex flex-col bg-[#262a35] font-['Roboto',sans-serif] text-[16.5px] leading-tight">
            <div className="h-[3px] shrink-0 bg-[linear-gradient(90deg,#150a24_0,#1e1040_1400px,#6d2ed0_1440px,#1a0b33_1500px,#5a1f9a_1850px,#c23be0_1980px,#301040_2020px,#12081f_2273px)]" />
            <div className="h-[1462px] shrink-0 flex">
                <Sidebar />
                <div className="flex-1 flex flex-col">
                    <TitleBar />
                    <div className="flex-1 flex bg-[#3a3d46]">
                        <div className="w-[1331px] shrink-0 flex flex-col">
                            <div className="h-[1023px] shrink-0 flex">
                                <div className="w-[378px] shrink-0 pl-[28px] pt-[28px] flex flex-col gap-[11px]">
                                    <Card title="Temperature" value="61°C" selected rows={[['Tj Max', '100°C'], ['Dist to Tj Max', '39°C']]} />
                                    <Card title="Utilization" value="3.7%" rows={[['P-Cores', '5.8%'], ['E-Cores', '1.6%']]} />
                                    <Card title="Clock" value="3.26 GHz" rows={[['P-Cores', '4.22 GHz'], ['E-Cores', '2.78 GHz']]} />
                                    <Card title="Power" power rows={[['Cores', '9.69 W'], ['Package', '14.04 W']]} />
                                    <Card title="VID" value="1.278 V" rows={[['P-Cores', '1.164 V'], ['E-Cores', '1.335 V']]} />
                                </div>
                                <div className="w-[953px] shrink-0 flex flex-col">
                                    <div className="h-[113px] shrink-0 flex text-[#e6e6e6]">
                                        <div className="ml-[24px] pt-[11px] flex flex-col">
                                            <span className="h-[20px] leading-[20px]">Thermal state</span>
                                            <div className="ml-[25px] mt-[9px] w-[47px] h-[47px] rounded-full border-[3px] border-[#77797d] bg-black p-[2px]">
                                                <div className="w-full h-full rounded-full bg-[linear-gradient(180deg,#e9c6a8_0,#e6b894_48%,#e5a72f_52%,#f2c25a_100%)]" />
                                            </div>
                                        </div>
                                        <div className="ml-auto mr-[44px] pt-[11px] flex gap-[22px]">
                                            <div className="flex flex-col items-center gap-[4px]">
                                                <span className="h-[20px] leading-[20px]">Parked cores</span>
                                                <Segment value="11" />
                                            </div>
                                            <div className="flex flex-col items-center gap-[4px]">
                                                <span className="h-[20px] leading-[20px]">Enabled cores</span>
                                                <Segment value="21" />
                                            </div>
                                        </div>
                                    </div>
                                    <TempChart />
                                    <OverviewChart />
                                    <InfoBlock />
                                    <div className="h-px shrink-0 mt-[18px] ml-[11px] w-[936px] bg-[#565a63]" />
                                    <PowerBlock />
                                    <div className="h-px shrink-0 mt-[22px] ml-[11px] w-[936px] bg-[#565a63]" />
                                    <ControlBlock />
                                </div>
                            </div>
                            <div className="h-[3px] shrink-0 bg-[#4a4e57]" />
                            <WorkloadPanel />
                        </div>
                        <div className="w-[7px] shrink-0 bg-[#3f424b] border-x border-[#565a63]" />
                        <div className="w-[828px] shrink-0 flex flex-col bg-[#464952] pt-[3px]">
                            <HybridPanel />
                            <ClockPanel />
                        </div>
                        <Rail />
                    </div>
                </div>
            </div>
            <div className="flex-1 flex items-center text-[#e6e6e6] pl-[6px] pr-[7px] pt-[4px]">
                <span className="text-[17px]">Version</span>
                <span className="ml-[24px] text-[17px]">5.0.7.0</span>
                <span className="ml-auto text-[14.8px]">Copyright © 2025 CoderBag LLC</span>
            </div>
            <PolicyPopup />
            {/* annotation arrow and mouse pointer sit over everything */}
            <svg width="32" height="76" viewBox="1340 862 32 76" className="absolute left-[1340px] top-[862px]">
                <path d="M1364 862l6 1-9 46 8 2-22 25-6-33 12 3z" fill="#f94242" />
            </svg>
            <svg width="20" height="28" viewBox="0 0 20 28" className="absolute left-[1442px] top-[1128px]">
                <path d="M1 1v21l5-5 4 9 3-1-4-9h7z" fill="#fff" stroke="#000" strokeWidth="1" />
            </svg>
        </div>
    );
}
